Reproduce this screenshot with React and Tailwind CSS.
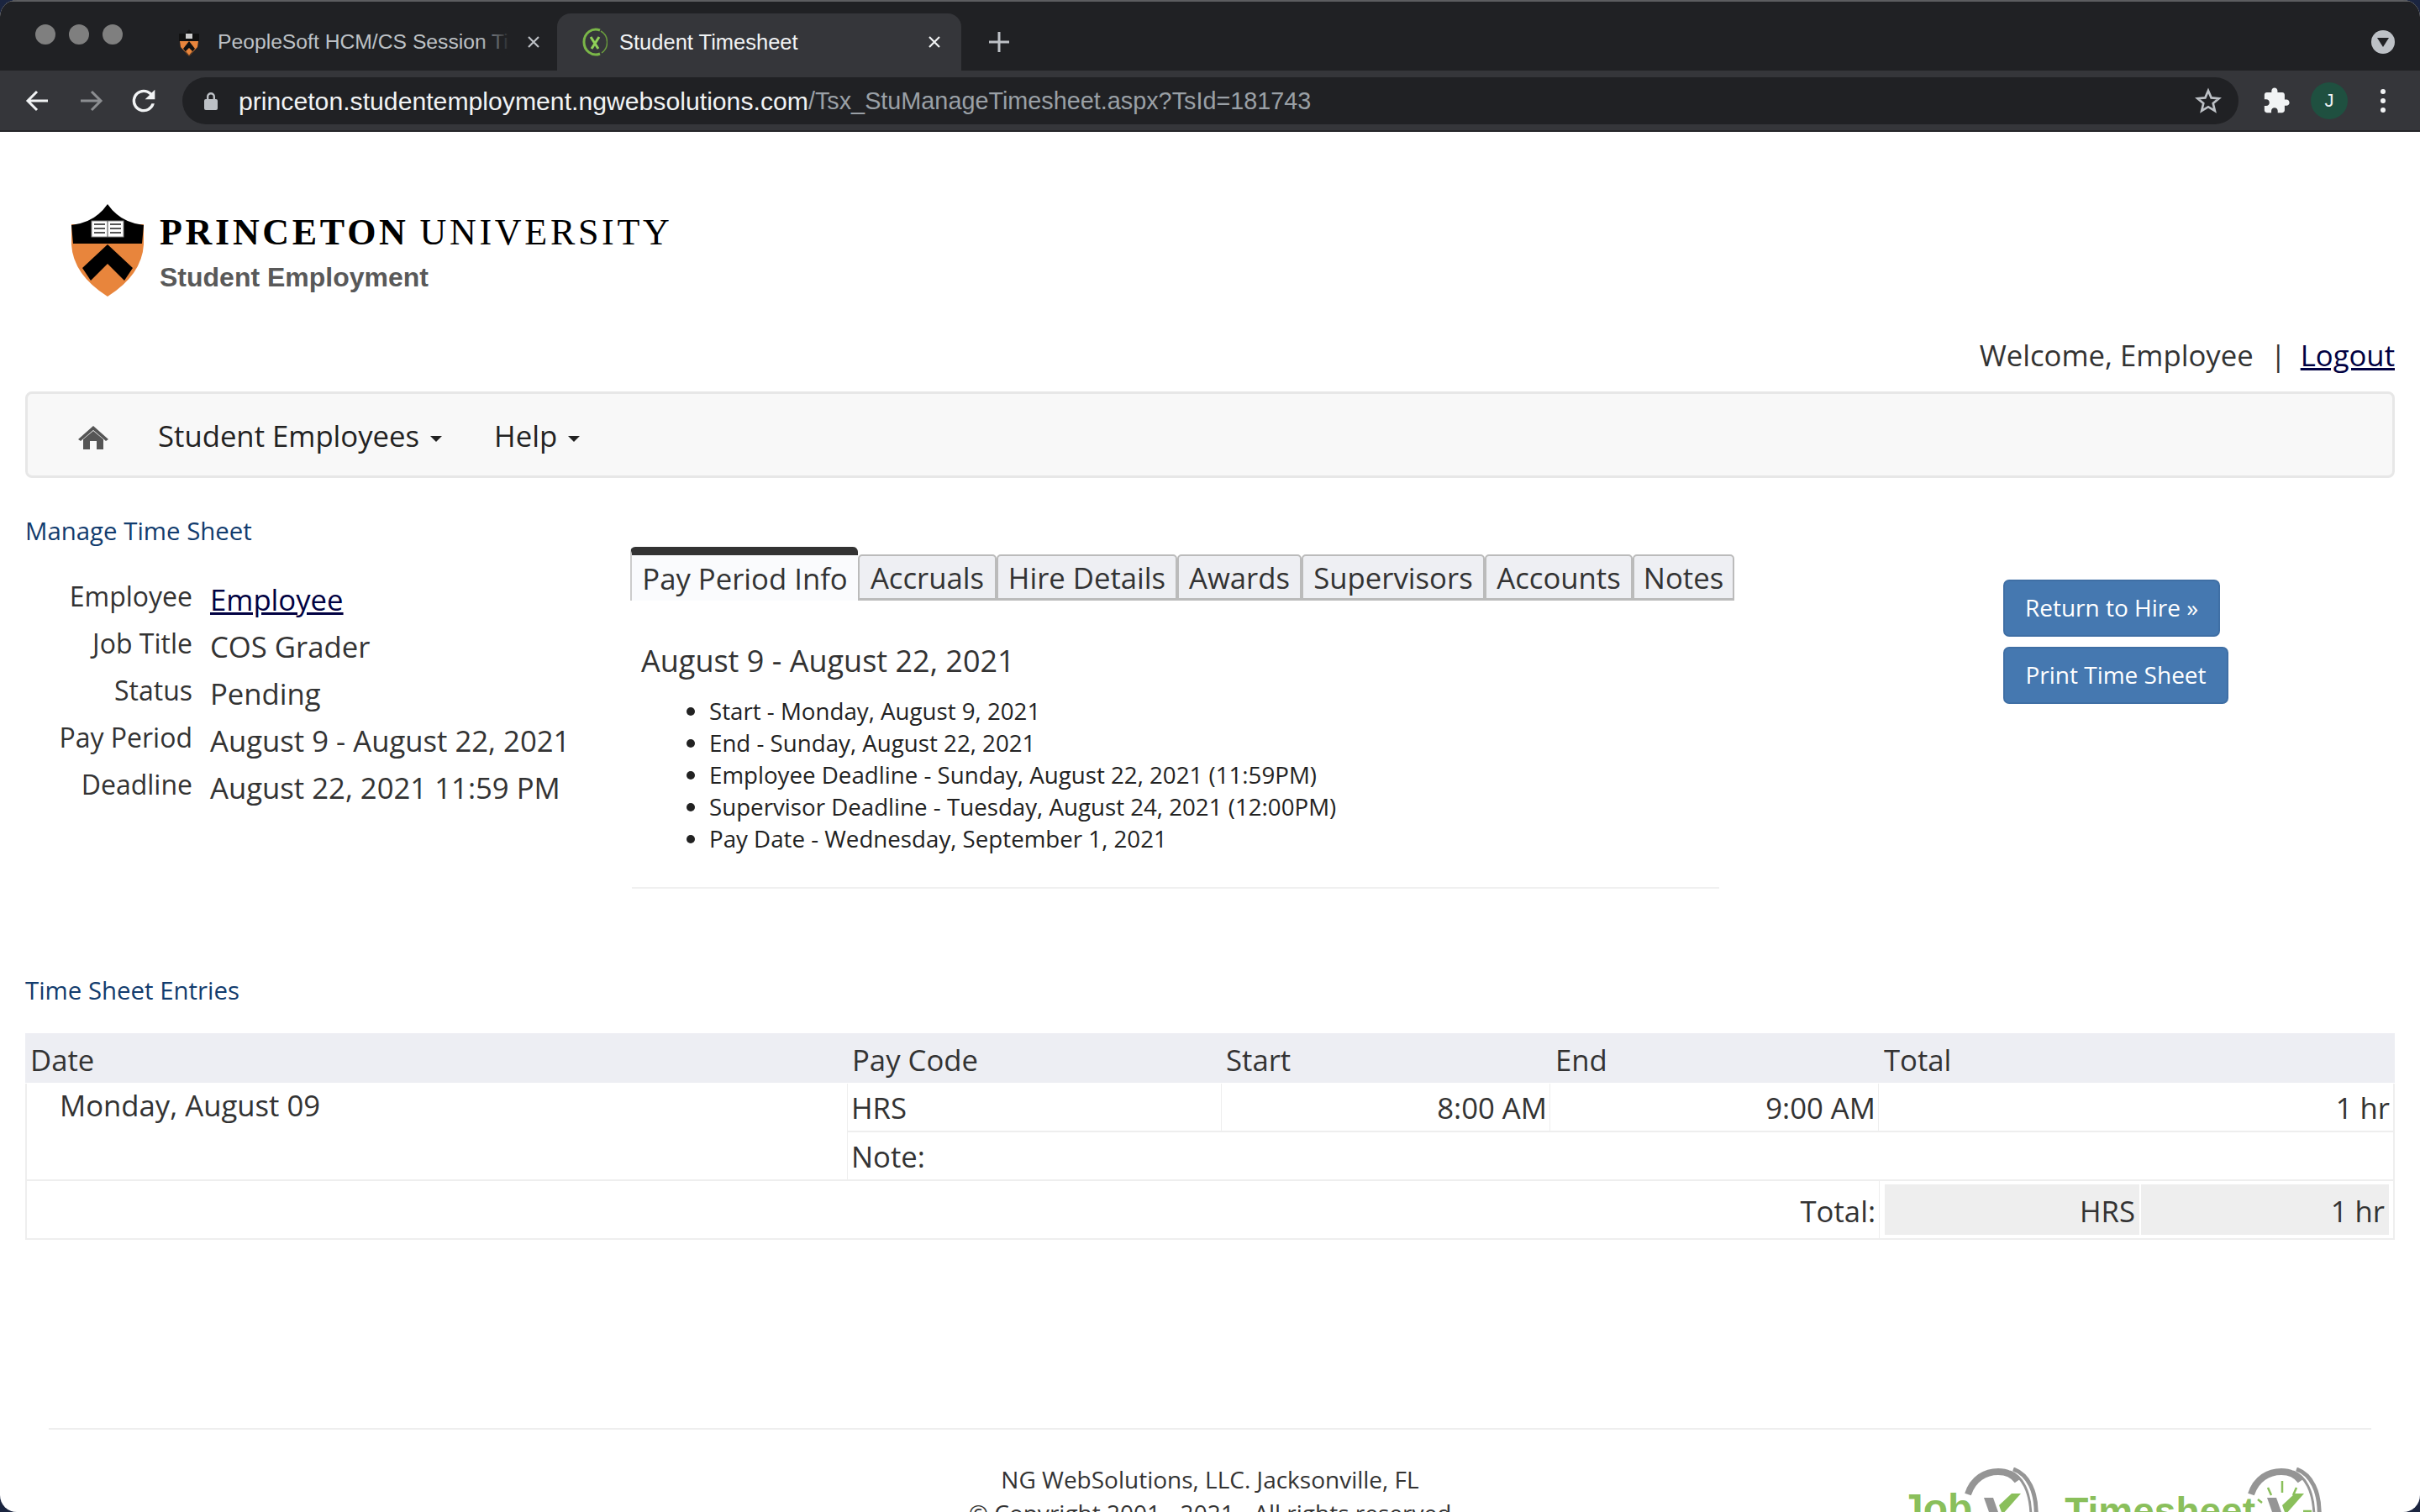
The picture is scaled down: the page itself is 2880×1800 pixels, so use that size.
import React from 'react';

const sans = "font-['Open_Sans',sans-serif]";
const chromeFont = "font-['Liberation_Sans',Arial,sans-serif]";

const tabs = [
  ['Pay Period Info', 'w-[271px]', true],
  ['Accruals', 'w-[165px]'],
  ['Hire Details', 'w-[215px]'],
  ['Awards', 'w-[148px]'],
  ['Supervisors', 'w-[218px]'],
  ['Accounts', 'w-[176px]'],
  ['Notes', 'w-[121px]'],
];

const details = [
  ['Employee', 'Employee'],
  ['Job Title', 'COS Grader'],
  ['Status', 'Pending'],
  ['Pay Period', 'August 9 - August 22, 2021'],
  ['Deadline', 'August 22, 2021 11:59 PM'],
];

const dates = [
  'Start - Monday, August 9, 2021',
  'End - Sunday, August 22, 2021',
  'Employee Deadline - Sunday, August 22, 2021 (11:59PM)',
  'Supervisor Deadline - Tuesday, August 24, 2021 (12:00PM)',
  'Pay Date - Wednesday, September 1, 2021',
];

function Shield() {
  return (
    <svg viewBox="0 0 86 110" className="w-[86px] h-[110px] shrink-0">
      <path d="M0 24 L86 24 L86 48 Q84 84 43 110 Q2 84 0 48 Z" fill="#e8853c" />
      <path d="M0 25 Q28 22 43 0 Q58 22 86 25 L84 47 L2 47 Z" fill="#000" />
      <path d="M43 48 L73 76 L63 91 L43 71 L23 91 L13 76 Z" fill="#000" />
      <rect x="24" y="20" width="38" height="19" fill="#fff" stroke="#888" />
      <line x1="43" y1="20" x2="43" y2="39" stroke="#444" />
      <path d="M27 24h13M27 29h13M27 34h13M46 24h13M46 29h13M46 34h13" stroke="#555" strokeWidth="2" />
    </svg>
  );
}

function SmallShield() {
  return (
    <svg viewBox="0 0 28 33" className="w-[28px] h-[33px] shrink-0">
      <path d="M2 6 L10 6 L14 1 L18 6 L26 6 L26 15 L2 15 Z" fill="#111" />
      <rect x="10" y="6" width="8" height="6" fill="#ccc" />
      <path d="M3 15 L25 15 L24 22 L14 33 L4 22 Z" fill="#e8853c" />
      <path d="M14 15 L21 24 L14 33 L7 24 Z" fill="#111" />
      <path d="M14 23 L18 27 L14 32 L10 27 Z" fill="#e8853c" />
    </svg>
  );
}

function TimesheetIcon() {
  return (
    <svg viewBox="0 0 30 34" className="w-[30px] h-[34px] shrink-0" fill="none">
      <path d="M21 3 A14 15 0 1 0 21 31" stroke="#7ab648" strokeWidth="3" />
      <path d="M22 4 A14 15 0 0 1 23 30" stroke="#6a9c3e" strokeWidth="1.5" />
      <path d="M10 11 L19 25 M20 11 L11 25" stroke="#8fcf58" strokeWidth="3" />
    </svg>
  );
}

function CloseX() {
  return (
    <svg viewBox="0 0 16 16" className="w-[16px] h-[16px] shrink-0" stroke="currentColor" strokeWidth="2.2">
      <path d="M2 2 L14 14 M14 2 L2 14" />
    </svg>
  );
}

function Caret() {
  return <span className="inline-block ml-[13px] w-0 h-0 border-x-[7px] border-x-transparent border-t-[7px] border-t-[#222] align-middle" />;
}

function ClockLogo({ ticks }) {
  return (
    <svg viewBox="0 0 90 80" className="w-[90px] h-[80px] shrink-0" fill="none">
      <path d="M4 32 C10 13 25 5 40 5 C50 5 58 9 63 16" stroke="#959595" strokeWidth="8" />
      <path d="M58 2 C75 8 87 28 85 62" stroke="#959595" strokeWidth="5" />
      <path d="M54 5 C68 10 79 28 79 60" stroke="#959595" strokeWidth="3" />
      {ticks && <path d="M24 24 L28 33 M41 16 L41 30 M58 24 L54 33 M12 38 L17 42 M66 52 L76 52" stroke="#8abf5b" strokeWidth="2.5" />}
      <path d="M23 36 L34 36 L46 70 L35 70 Z" fill="#959595" />
      <path d="M56 31 L67 31 L45 56 L41 45 Z" fill="#8abf5b" />
    </svg>
  );
}

function ChromeBar() {
  return (
    <div className={`${chromeFont} shrink-0`}>
      <div className="h-[84px] bg-[#202124] border-t-2 border-t-[#5c5d60] flex items-end pl-[42px] pr-[30px] relative">
        <div className="flex gap-[16px] h-[82px] items-center pb-[4px] shrink-0">
          <span className="w-[24px] h-[24px] rounded-full bg-[#7f7f7f]" />
          <span className="w-[24px] h-[24px] rounded-full bg-[#7f7f7f]" />
          <span className="w-[24px] h-[24px] rounded-full bg-[#7f7f7f]" />
        </div>
        <div className="ml-[65px] w-[452px] h-[68px] flex items-center gap-[20px] text-[#bdc1c6] text-[24.7px] shrink-0">
          <SmallShield />
          <span className="relative w-[348px] overflow-hidden whitespace-nowrap">
            PeopleSoft HCM/CS Session Ti
            <span className="absolute right-0 top-0 bottom-0 w-[36px] bg-gradient-to-r from-transparent to-[#202124]" />
          </span>
          <CloseX />
        </div>
        <div className="w-[481px] h-[68px] bg-[#35363a] rounded-t-[16px] flex items-center pl-[30px] pr-[24px] text-[#f1f3f4] text-[25.5px] shrink-0">
          <TimesheetIcon />
          <span className="ml-[14px] flex-1">Student Timesheet</span>
          <CloseX />
        </div>
        <span className="ml-[32px] mb-[14px] h-[40px] flex items-center text-[#bdc1c6]">
          <svg viewBox="0 0 26 26" className="w-[26px] h-[26px]" stroke="currentColor" strokeWidth="3">
            <path d="M13 1 V25 M1 13 H25" />
          </svg>
        </span>
        <span className="absolute right-[30px] top-[34px] w-[28px] h-[28px] rounded-full bg-[#bdc1c6] flex items-center justify-center">
          <span className="w-0 h-0 border-x-[7px] border-x-transparent border-t-[11px] border-t-[#202124]" />
        </span>
      </div>
      <div className="h-[73px] bg-[#35363a] border-b-2 border-b-[#26272a] flex items-center pl-[30px]">
        <svg viewBox="0 0 28 26" className="w-[28px] h-[26px] text-[#f1f3f4] shrink-0" fill="none" stroke="currentColor" strokeWidth="3">
          <path d="M27 13 H3 M14 2 L3 13 L14 24" />
        </svg>
        <svg viewBox="0 0 28 26" className="ml-[37px] w-[28px] h-[26px] text-[#8c8e91] shrink-0" fill="none" stroke="currentColor" strokeWidth="3">
          <path d="M1 13 H25 M14 2 L25 13 L14 24" />
        </svg>
        <svg viewBox="0 0 24 24" className="ml-[28px] w-[40px] h-[40px] text-[#f1f3f4] shrink-0" fill="currentColor">
          <path d="M17.65 6.35A7.96 7.96 0 0 0 12 4a8 8 0 1 0 7.73 10h-2.08A6 6 0 1 1 12 6c1.66 0 3.14.69 4.22 1.78L13 11h7V4l-2.35 2.35z" />
        </svg>
        <div className="ml-[26px] h-[56px] w-[2447px] rounded-full bg-[#202124] flex items-center pl-[24px] pr-[20px] shrink-0">
          <svg viewBox="0 0 20 22" className="w-[20px] h-[22px] text-[#bdc1c6] shrink-0" fill="currentColor">
            <path d="M5 9 V6 a5 5 0 0 1 10 0 V9 h-2.4 V6 a2.6 2.6 0 0 0 -5.2 0 V9 Z" />
            <rect x="2" y="9" width="16" height="13" rx="2" />
          </svg>
          <span className="ml-[23px] pt-[2px] text-[30.2px] text-[#f1f3f4] whitespace-nowrap">princeton.studentemployment.ngwebsolutions.com</span>
          <span className="pt-[2px] text-[28.8px] text-[#9aa0a6] whitespace-nowrap">/Tsx_StuManageTimesheet.aspx?TsId=181743</span>
          <svg viewBox="0 0 24 24" className="ml-auto w-[32px] h-[32px] text-[#bdc1c6] shrink-0" fill="none" stroke="currentColor" strokeWidth="2">
            <path d="M12 3 L14.7 9.3 L21.5 9.9 L16.3 14.3 L17.9 21 L12 17.4 L6.1 21 L7.7 14.3 L2.5 9.9 L9.3 9.3 Z" />
          </svg>
        </div>
        <svg viewBox="0 0 24 24" className="ml-[28px] w-[34px] h-[34px] text-[#f1f3f4] shrink-0" fill="currentColor">
          <path d="M20.5 11H19V7c0-1.1-.9-2-2-2h-4V3.5C13 2.12 11.88 1 10.5 1S8 2.12 8 3.5V5H4c-1.1 0-1.99.9-1.99 2v3.8H3.5c1.49 0 2.7 1.21 2.7 2.7s-1.21 2.7-2.7 2.7H2V20c0 1.1.9 2 2 2h3.8v-1.5c0-1.49 1.21-2.7 2.7-2.7 1.49 0 2.7 1.21 2.7 2.7V22H17c1.1 0 2-.9 2-2v-4h1.5c1.38 0 2.5-1.12 2.5-2.5S21.88 11 20.5 11z" />
        </svg>
        <span className="ml-[24px] w-[44px] h-[44px] rounded-full bg-[#1f5040] text-[#f1f3f4] text-[22px] flex items-center justify-center shrink-0">J</span>
        <span className="ml-[39px] flex flex-col gap-[5px] shrink-0">
          <span className="w-[6px] h-[6px] rounded-full bg-[#f1f3f4]" />
          <span className="w-[6px] h-[6px] rounded-full bg-[#f1f3f4]" />
          <span className="w-[6px] h-[6px] rounded-full bg-[#f1f3f4]" />
        </span>
      </div>
    </div>
  );
}

function Header() {
  return (
    <>
      <div className="h-[196px] pl-[85px] pt-[86px] flex items-start">
        <Shield />
        <div className="ml-[19px] pt-[11px]">
          <div className="font-['Liberation_Serif',serif] text-[44px] leading-[46px] text-black whitespace-nowrap tracking-[3.7px]">
            <span className="font-bold">PRINCETON</span>
            <span className="ml-[13px]">UNIVERSITY</span>
          </div>
          <div className="font-['Liberation_Sans',sans-serif] font-bold text-[32px] leading-[38px] mt-[11px] text-[#595959] whitespace-nowrap">Student Employment</div>
        </div>
      </div>
      <div className="h-[113px] pt-[44px] flex items-start justify-end pr-[30px] text-[34.7px] leading-[52px] text-[#333]">
        <span>Welcome, Employee</span>
        <span className="ml-[20px] mr-[17px]">|</span>
        <span className="text-[#010142] underline">Logout</span>
      </div>
    </>
  );
}

function Navbar() {
  return (
    <div className="mx-[30px] h-[103px] shrink-0 bg-[#f8f8f8] border-[3px] border-[#e7e7e7] rounded-[8px] flex items-center pt-[3px] text-[34.7px] text-[#222]">
      <svg viewBox="0 0 36 28" className="ml-[60px] w-[36px] h-[28px] mt-[4px] shrink-0" fill="#555">
        <path d="M18 0 L36 16 L33 18 L18 5 L3 18 L0 16 Z" />
        <path d="M6 16 L18 6 L30 16 V28 H22 V18 H14 V28 H6 Z" />
      </svg>
      <span className="ml-[59px]">Student Employees<Caret /></span>
      <span className="ml-[62px]">Help<Caret /></span>
    </div>
  );
}

function Details() {
  return (
    <div className="w-[750px] shrink-0 pl-[30px]">
      <div className="text-[29.4px] leading-[40px] text-[#123c6e] mt-[43px]">Manage Time Sheet</div>
      <div className="mt-[35px] grid grid-cols-[199px_1fr] gap-x-[21px] auto-rows-[56px]">
        {details.map(([label, value], i) => (
          <React.Fragment key={label}>
            <div className="text-[32px] leading-[46px] text-[#333] text-right">{label}</div>
            <div className={`text-[34.7px] leading-[53px] ${i === 0 ? 'text-[#010142] underline' : 'text-[#333]'}`}>{value}</div>
          </React.Fragment>
        ))}
      </div>
    </div>
  );
}

function PayPeriod() {
  return (
    <div className="w-[1634px] shrink-0 pt-[82px]">
      <div className="flex items-end h-[64px]">
        {tabs.map(([name, w, active]) => (
          <div
            key={name}
            className={
              active
                ? `${w} h-[64px] shrink-0 bg-[#fafbfd] border-t-[10px] border-t-[#333] border-l-2 border-l-[#ccc] rounded-t-[6px] text-[34.7px] leading-[56px] text-center text-[#333] whitespace-nowrap`
                : `${w} h-[55px] shrink-0 bg-[#eeeff3] border-2 border-[#bbb] border-b-[3px] rounded-t-[5px] text-[34.7px] leading-[52px] text-center text-[#333] whitespace-nowrap`
            }
          >
            {name}
          </div>
        ))}
      </div>
      <div className="w-[1294px] ml-[2px] border-b-2 border-[#f0f0f0] pb-[39px]">
        <div className="pl-[11px] text-[36px] leading-[52px] text-[#333] mt-[46px]">August 9 - August 22, 2021</div>
        <ul className="list-disc pl-[92px] mt-[14px] text-[27.7px] leading-[38px] text-[#222]">
          {dates.map((d) => <li key={d}>{d}</li>)}
        </ul>
      </div>
    </div>
  );
}

function Actions() {
  return (
    <div className="flex flex-col items-start gap-[12px] pt-[121px] text-white text-[28px]">
      <div className="h-[68px] w-[258px] bg-[#4578b0] border-2 border-[#3f6fa5] rounded-[7px] flex items-center justify-center pb-[3px]">Return to Hire »</div>
      <div className="h-[68px] w-[268px] bg-[#4578b0] border-2 border-[#3f6fa5] rounded-[7px] flex items-center justify-center pb-[3px]">Print Time Sheet</div>
    </div>
  );
}

function Entries() {
  return (
    <div className="mx-[30px] text-[34.7px] text-[#333]">
      <div className="text-[29.4px] leading-[40px] text-[#123c6e] mb-[31px]">Time Sheet Entries</div>
      <div className="grid grid-cols-[984px_441px_391px_391px_612px] h-[59px] bg-[#edeef3] leading-[64px] mb-[1px]">
        <div className="pl-[6px]">Date</div>
        <div>Pay Code</div>
        <div className="pl-[4px]">Start</div>
        <div className="pl-[5px]">End</div>
        <div className="pl-[5px]">Total</div>
      </div>
      <div className="border-x-2 border-b-2 border-[#eee] flex">
        <div className="w-[977px] border-r border-[#eee] pl-[39px] leading-[52px] shrink-0">Monday, August 09</div>
        <div className="flex-1">
          <div className="grid grid-cols-[445px_391px_391px_1fr] h-[58px] border-b-2 border-[#eee] leading-[58px]">
            <div className="pl-[4px] border-r border-[#eee]">HRS</div>
            <div className="pr-[3px] text-right border-r border-[#eee]">8:00 AM</div>
            <div className="pr-[3px] text-right border-r border-[#eee]">9:00 AM</div>
            <div className="pr-[4px] text-right">1 hr</div>
          </div>
          <div className="h-[56px] pl-[4px] leading-[58px]">Note:</div>
        </div>
      </div>
      <div className="border-x-2 border-b-2 border-[#eee] flex h-[70px]">
        <div className="flex-1 text-right pr-[4px] leading-[72px]">Total:</div>
        <div className="w-[612px] border-l border-[#eee] pl-[6px] py-[4px] flex gap-[2px] pr-[5px] shrink-0">
          <div className="w-[303px] bg-[#eee] text-right pr-[5px] leading-[64px]">HRS</div>
          <div className="flex-1 bg-[#eee] text-right pr-[5px] leading-[64px]">1 hr</div>
        </div>
      </div>
    </div>
  );
}

function Footer() {
  return (
    <div className="mx-[58px] mt-[224px] border-t-2 border-[#eee] pt-[39px] relative h-[100px]">
      <div className="text-center text-[28px] leading-[40px] text-[#333] whitespace-nowrap">
        <div>NG WebSolutions, LLC. Jacksonville, FL</div>
        <div>© Copyright 2001 - 2021 - All rights reserved</div>
      </div>
      <div className="absolute right-[57px] top-[45px] flex items-start font-['Liberation_Sans',sans-serif] font-bold text-[#8abf5b] leading-[46px]">
        <span className="text-[48px] mt-[26px] -mr-[9px]">Job</span>
        <ClockLogo />
        <span className="text-[46px] ml-[29px] mt-[29px] -mr-[9px]">Timesheet</span>
        <ClockLogo ticks />
      </div>
    </div>
  );
}

export default function App() {
  return (
    <div className="w-[2880px] h-[1800px] bg-[#1b2540] overflow-hidden">
      <div className={`${sans} w-[2880px] h-[1800px] bg-white rounded-[20px] overflow-hidden flex flex-col`}>
        <ChromeBar />
        <Header />
        <Navbar />
        <div className="flex h-[590px] shrink-0">
          <Details />
          <PayPeriod />
          <Actions />
        </div>
        <Entries />
        <Footer />
      </div>
    </div>
  );
}
